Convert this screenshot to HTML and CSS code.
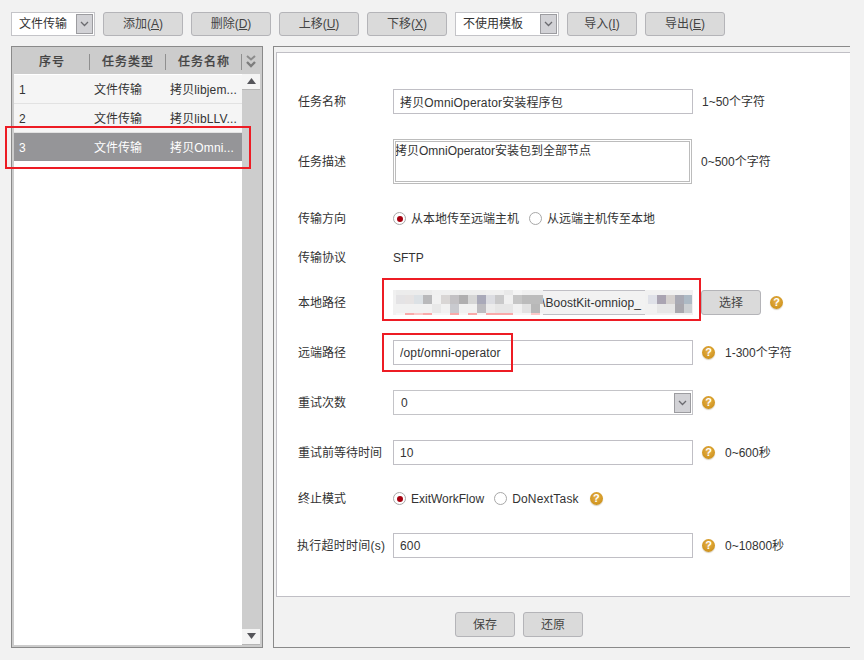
FILE: index.html
```html
<!DOCTYPE html>
<html lang="zh-CN">
<head>
<meta charset="utf-8">
<title>文件传输</title>
<link rel="stylesheet" href="styles.css">
</head>
<body>
<div class="page">
  <div class="toolbar">
    <div class="select sel-type"><span>文件传输</span><i class="arrow"><svg width="9" height="6" viewBox="0 0 9 6"><path d="M1 1l3.5 3.5L8 1" fill="none" stroke="#6b6b70" stroke-width="1.3"/></svg></i></div>
    <button class="btn w80 first">添加(<u>A</u>)</button>
    <button class="btn w80">删除(<u>D</u>)</button>
    <button class="btn w80">上移(<u>U</u>)</button>
    <button class="btn w80">下移(<u>X</u>)</button>
    <div class="select sel-tpl"><span>不使用模板</span><i class="arrow"><svg width="9" height="6" viewBox="0 0 9 6"><path d="M1 1l3.5 3.5L8 1" fill="none" stroke="#6b6b70" stroke-width="1.3"/></svg></i></div>
    <button class="btn w70">导入(<u>I</u>)</button>
    <button class="btn w80">导出(<u>E</u>)</button>
  </div>

  <div class="main">
    <section class="list">
      <div class="thead">
        <div class="th c1">序号</div>
        <div class="th c2">任务类型</div>
        <div class="th c3">任务名称</div>
        <div class="th c4"><svg width="10" height="13" viewBox="0 0 10 13"><path d="M1 1l4 3.5L9 1" fill="none" stroke="#8c8c8c" stroke-width="2"/><path d="M1 7l4 4 4-4" fill="none" stroke="#7c7c7c" stroke-width="2.4"/></svg></div>
      </div>
      <div class="tbody">
        <div class="rows">
          <div class="tr tr-first"><span class="td d1">1</span><span class="td d2">文件传输</span><span class="td d3">拷贝libjem...</span></div>
          <div class="tr"><span class="td d1">2</span><span class="td d2">文件传输</span><span class="td d3">拷贝libLLV...</span></div>
          <div class="tr selected"><span class="td d1">3</span><span class="td d2">文件传输</span><span class="td d3">拷贝Omni...</span></div>
        </div>
        <div class="scroll">
          <div class="sbtn sbtn-up"><svg width="9" height="6" viewBox="0 0 9 6"><path d="M4.5 0L9 6H0z" fill="#55555a"/></svg></div>
          <div class="sbtn sbtn-down"><svg width="9" height="6" viewBox="0 0 9 6"><path d="M4.5 6L9 0H0z" fill="#55555a"/></svg></div>
        </div>
      </div>
    </section>

    <section class="detail">
      <div class="card">
        <div class="row">
          <label class="lbl">任务名称</label>
          <input class="input" value="拷贝OmniOperator安装程序包">
          <span class="hint">1~50个字符</span>
        </div>
        <div class="row row-tall m25">
          <label class="lbl">任务描述</label>
          <textarea class="area">拷贝OmniOperator安装包到全部节点</textarea>
          <span class="hint">0~500个字符</span>
        </div>
        <div class="row m22">
          <label class="lbl">传输方向</label>
          <span class="radio on"></span><span class="rtext r1">从本地传至远端主机</span>
          <span class="radio"></span><span class="rtext">从远端主机传至本地</span>
        </div>
        <div class="row m14">
          <label class="lbl">传输协议</label>
          <span class="plain">SFTP</span>
        </div>
        <div class="row m20">
          <label class="lbl">本地路径</label>
          <div class="pathbox">
            <input class="input input-off" value="\BoostKit-omniop_" disabled>
            <svg class="mosaic" width="300" height="25" viewBox="393 290 300 25">
              <g fill="#efefef"><rect x="393" y="290" width="150" height="5" fill="#f0f0f0"/><rect x="396" y="290" width="36" height="5" fill="#ececec"/><rect x="459" y="290" width="27" height="5" fill="#eeeeee"/><rect x="504" y="290" width="9" height="5" fill="#e9e9e9"/><rect x="513" y="290" width="9" height="5" fill="#f5f5f5"/></g>
              <rect x="393" y="295" width="3" height="20" fill="#f1f1f1"/>
              <rect x="396" y="295" width="9" height="9" fill="#e4e3e5"/><rect x="405" y="295" width="9" height="9" fill="#e6e3e3"/><rect x="414" y="295" width="9" height="9" fill="#dce1e5"/><rect x="423" y="295" width="9" height="9" fill="#b9b9bb"/><rect x="432" y="295" width="9" height="9" fill="#f1f1f1"/><rect x="441" y="295" width="9" height="9" fill="#d9d6d5"/><rect x="450" y="295" width="9" height="9" fill="#c3c1c4"/><rect x="459" y="295" width="9" height="9" fill="#b0afb0"/><rect x="468" y="295" width="9" height="9" fill="#d6d6d6"/><rect x="477" y="295" width="9" height="9" fill="#a9a9b9"/><rect x="486" y="295" width="9" height="9" fill="#dcdde2"/><rect x="495" y="295" width="9" height="9" fill="#c9c9ca"/><rect x="504" y="295" width="9" height="9" fill="#f0f0f0"/><rect x="513" y="295" width="9" height="9" fill="#c6c6c6"/><rect x="522" y="295" width="21" height="9" fill="#bcbcbc"/>
              <rect x="396" y="304" width="147" height="9" fill="#f1f1f1"/><rect x="432" y="304" width="9" height="9" fill="#e8e8e8"/><rect x="450" y="304" width="9" height="9" fill="#c9cacf"/><rect x="477" y="304" width="9" height="9" fill="#bdbcc0"/><rect x="486" y="304" width="9" height="9" fill="#ececec"/><rect x="495" y="304" width="18" height="9" fill="#e6e6e6"/><rect x="522" y="304" width="9" height="9" fill="#e2e2e2"/><rect x="531" y="304" width="9" height="9" fill="#b8b8b8"/>
              <rect x="396" y="313" width="147" height="2" fill="#f6f6f6"/><rect x="405" y="313" width="9" height="2" fill="#f9a9a9"/><rect x="414" y="313" width="9" height="2" fill="#fcc8c8"/><rect x="423" y="313" width="9" height="2" fill="#f9a9a9"/><rect x="450" y="313" width="9" height="2" fill="#f9a9a9"/><rect x="468" y="313" width="9" height="2" fill="#f9a9a9"/><rect x="486" y="313" width="27" height="2" fill="#f9a9a9"/><rect x="531" y="313" width="9" height="2" fill="#fcc8c8"/>
              <rect x="645" y="290" width="48" height="25" fill="#f1f1f1"/><rect x="648" y="295" width="9" height="9" fill="#dfe1e8"/><rect x="657" y="295" width="9" height="9" fill="#aaa4b2"/><rect x="666" y="295" width="9" height="9" fill="#d4d0ce"/><rect x="675" y="295" width="9" height="9" fill="#a9aab4"/><rect x="684" y="295" width="8" height="9" fill="#adbac5"/><rect x="657" y="304" width="18" height="9" fill="#e6e6e6"/><rect x="675" y="304" width="9" height="9" fill="#a9a8ae"/><rect x="684" y="304" width="8" height="9" fill="#ccd0d3"/>
            </svg>
          </div>
          <button class="btn w60 choose">选择</button>
          <span class="help">?</span>
        </div>
        <div class="row m25">
          <label class="lbl">远端路径</label>
          <input class="input" value="/opt/omni-operator">
          <span class="help">?</span>
          <span class="hint">1-300个字符</span>
        </div>
        <div class="row m25">
          <label class="lbl">重试次数</label>
          <div class="select sel-retry"><span>0</span><i class="arrow"><svg width="9" height="6" viewBox="0 0 9 6"><path d="M1 1l3.5 3.5L8 1" fill="none" stroke="#6b6b70" stroke-width="1.3"/></svg></i></div>
          <span class="help">?</span>
        </div>
        <div class="row m25">
          <label class="lbl">重试前等待时间</label>
          <input class="input" value="10">
          <span class="help">?</span>
          <span class="hint">0~600秒</span>
        </div>
        <div class="row m21">
          <label class="lbl">终止模式</label>
          <span class="radio on"></span><span class="rtext r2">ExitWorkFlow</span>
          <span class="radio"></span><span class="rtext wide">DoNextTask</span>
          <span class="help help-mode">?</span>
        </div>
        <div class="row m22">
          <label class="lbl lbl-wide">执行超时时间(s)</label>
          <input class="input" value="600">
          <span class="help">?</span>
          <span class="hint">0~10800秒</span>
        </div>
      </div>
      <div class="actions">
        <button class="btn w60">保存</button>
        <button class="btn w60">还原</button>
      </div>
    </section>
  </div>

  <div class="mark mark-row"></div>
  <div class="mark mark-local"></div>
  <div class="mark mark-remote"></div>
</div>
</body>
</html>
```

FILE: styles.css
```css
* { box-sizing: border-box; }
html, body { margin: 0; padding: 0; }
body {
  width: 864px;
  height: 660px;
  overflow: hidden;
  background: #f2f2f2;
  color: #333;
  font: 12px/16px "Liberation Sans", "Noto Sans CJK SC", sans-serif;
}
.page { position: relative; width: 864px; height: 660px; }

.toolbar { display: flex; align-items: flex-start; gap: 8px; padding: 12px 0 0 11px; height: 46px; }
.btn {
  display: block;
  height: 24px;
  padding: 0;
  border: 1px solid #b4b4b8;
  border-radius: 3px;
  background: #dadada;
  color: #444;
  font: inherit;
  text-align: center;
}
.btn u { text-underline-offset: 1px; }
.w80 { width: 80px; }
.w70 { width: 70px; }
.w60 { width: 60px; height: 25px; }

.select {
  display: flex;
  align-items: center;
  justify-content: space-between;
  height: 24px;
  padding: 0 1px 0 7px;
  border: 1px solid #c4c4c8;
  background: #fff;
}
.sel-type { width: 84px; }
.sel-tpl { width: 104px; }
.sel-retry { width: 300px; height: 25px; }
.arrow {
  display: flex;
  align-items: center;
  justify-content: center;
  width: 17px;
  height: 20px;
  border: 1px solid #9c9ca0;
  background: #d2d2d6;
}

.main { display: flex; align-items: flex-start; padding-left: 11px; }

.list {
  display: flex;
  flex-direction: column;
  width: 252px;
  height: 602px;
  padding: 2px;
  border: 1px solid #8a8a8a;
  background: #cccccc;
}
.thead { display: flex; height: 25px; flex: none; align-items: center; }
.th {
  height: 16px;
  padding-left: 1px;
  border-right: 1px solid #8f8f8f;
  text-align: center;
  letter-spacing: 1px;
  color: #444;
  font-weight: 500;
  -webkit-text-stroke: 0.2px #444;
}
.c1 { width: 76px; }
.c2 { width: 76px; }
.c3 { width: 76px; }
.c4 { flex: 1; padding: 1px 0 0; border-right: 0; display: flex; justify-content: center; }

.tbody { flex: 1; display: flex; min-height: 0; }
.rows { width: 228px; background: #fff; }
.tr {
  display: flex;
  align-items: center;
  height: 29px;
  padding-top: 1px;
  border-bottom: 1px solid #e2e2e2;
  background: #f5f5f5;
}
.tr-first { height: 30px; border-top: 1px solid #fff; }
.tr.selected { height: 28px; border: 0; background: #959598; color: #fff; }
.td { display: block; }
.d1 { width: 80px; padding-left: 5px; }
.d2 { width: 76px; }
.d3 { letter-spacing: .15px; }

.scroll {
  position: relative;
  flex: 1;
  display: flex;
  flex-direction: column;
  justify-content: space-between;
  background: #cdcdcd;
}
.sbtn {
  display: flex;
  align-items: center;
  justify-content: center;
  height: 16px;
  padding-bottom: 2px;
  background: #f4f4f4;
  border-bottom: 1px solid #b5b5b5;
}

.detail {
  width: 577px;
  height: 602px;
  margin-left: 10px;
  padding: 5px 0 0 2px;
  border: 1px solid #8a8a8a;
  border-right: 0;
}
.card {
  height: 545px;
  padding: 36px 0 0 20px;
  border: 1px solid #c0bfc5;
  border-right: 0;
  background: #fff;
}
.row { display: flex; align-items: center; height: 25px; }
.row-tall { height: 45px; }
.m14 { margin-top: 14px; }
.m20 { margin-top: 20px; }
.m21 { margin-top: 21px; }
.m22 { margin-top: 22px; }
.m25 { margin-top: 25px; }

.lbl { display: block; width: 96px; flex: none; padding-left: 1px; }
.lbl-wide { padding-left: 0; letter-spacing: .25px; white-space: nowrap; }
.input {
  display: block;
  width: 300px;
  height: 25px;
  padding: 0 6px;
  border: 1px solid #c0bfc5;
  border-radius: 0;
  outline: 0;
  background: #fff;
  color: #333;
  font: inherit;
  letter-spacing: .15px;
}
.area {
  display: block;
  width: 299px;
  height: 45px;
  padding: 1px 0 0;
  border: 3px double #bcbcbc;
  border-radius: 0;
  outline: 0;
  resize: none;
  overflow: hidden;
  color: #333;
  font: inherit;
  text-indent: -1px;
}
.pathbox { position: relative; width: 300px; height: 25px; }
.input-off { padding-left: 148px; background: #f2f2f2; color: #333; opacity: 1; letter-spacing: .05px; }
.mosaic { position: absolute; left: 0; top: 0; }
.choose { margin-left: 8px; }

.hint { display: block; margin-left: 9px; }
.help + .hint { margin-left: 10px; }
.help {
  display: block;
  flex: none;
  width: 13px;
  height: 13px;
  margin-left: 9px;
  border-radius: 50%;
  background: radial-gradient(circle at 50% 40%, #e6b04a 0%, #d19621 65%, #b97f12 100%);
  box-shadow: 0 1px 1px rgba(120, 90, 30, .3);
  color: #fff;
  font-size: 11px;
  font-weight: 700;
  line-height: 13px;
  text-align: center;
}
.plain { display: block; }

.radio {
  position: relative;
  display: block;
  flex: none;
  width: 13px;
  height: 13px;
  border: 1px solid #a8a8a8;
  border-radius: 50%;
  background: #fff;
}
.radio.on::after {
  content: "";
  position: absolute;
  left: 2.5px;
  top: 2.5px;
  width: 6px;
  height: 6px;
  border-radius: 50%;
  background: #a5000f;
}
.rtext { display: block; margin-left: 5px; }
.wide { letter-spacing: .2px; }
.r1 { margin-right: 10px; }
.r2 { margin-right: 10px; }
.help-mode { margin-left: 11px; }

.actions { display: flex; gap: 8px; padding: 15px 0 0 179px; }

.mark { position: absolute; border: 2px solid #ed1c24; pointer-events: none; }
.mark-row { left: 5px; top: 126px; width: 246px; height: 43px; }
.mark-local { left: 382px; top: 278px; width: 319px; height: 43px; }
.mark-remote { left: 382px; top: 333px; width: 131px; height: 39px; }
```
